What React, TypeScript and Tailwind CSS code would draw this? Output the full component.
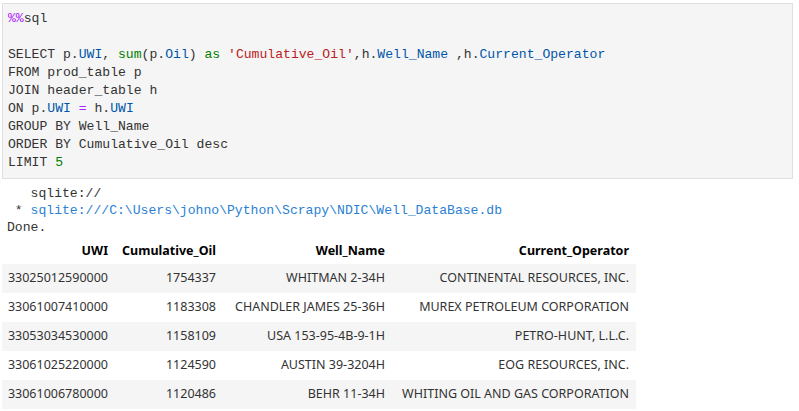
const mono = { fontFamily: '"Liberation Mono", "DejaVu Sans Mono", monospace' };

const rows = [
  ["33025012590000", "1754337", "WHITMAN 2-34H", "CONTINENTAL RESOURCES, INC."],
  ["33061007410000", "1183308", "CHANDLER JAMES 25-36H", "MUREX PETROLEUM CORPORATION"],
  ["33053034530000", "1158109", "USA 153-95-4B-9-1H", "PETRO-HUNT, L.L.C."],
  ["33061025220000", "1124590", "AUSTIN 39-3204H", "EOG RESOURCES, INC."],
  ["33061006780000", "1120486", "BEHR 11-34H", "WHITING OIL AND GAS CORPORATION"],
];

const cols = ["UWI", "Cumulative_Oil", "Well_Name", "Current_Operator"];
const widths = ["w-[113px]", "w-[108px]", "w-[169px]", "w-[244px]"];

function Blue({ children }: { children: React.ReactNode }) {
  return <span className="text-[#0055aa]">{children}</span>;
}
function Green({ children }: { children: React.ReactNode }) {
  return <span className="text-[#008000]">{children}</span>;
}

export default function App() {
  return (
    <div className="w-[799px] h-[411px] overflow-hidden bg-white pl-[2px] pt-[3px]">
      {/* input cell */}
      <div
        className="w-[791px] h-[176px] border border-[#e0e0e0] bg-[#f5f5f5] px-[5px] pt-[6px] text-[13.1px] leading-[18px] text-[#333] whitespace-pre"
        style={mono}
      >
        <div>
          <span className="text-[#aa22ff]">%%</span>sql
        </div>
        <div> </div>
        <div>
          SELECT p.<Blue>UWI</Blue>, <Green>sum</Green>(p.<Blue>Oil</Blue>) <Green>as</Green>{" "}
          <span className="text-[#ba2121]">'Cumulative_Oil'</span>,h.<Blue>Well_Name</Blue> ,h.
          <Blue>Current_Operator</Blue>
        </div>
        <div>FROM prod_table p</div>
        <div>JOIN header_table h</div>
        <div>
          ON p.<Blue>UWI</Blue> <span className="text-[#aa22ff]">=</span> h.<Blue>UWI</Blue>
        </div>
        <div>GROUP BY Well_Name</div>
        <div>ORDER BY Cumulative_Oil desc</div>
        <div>
          LIMIT <Green>5</Green>
        </div>
      </div>

      {/* output */}
      <div
        className="pl-[5px] pt-[6px] text-[13.1px] leading-[17px] text-[#333] whitespace-pre"
        style={mono}
      >
        <div>   sqlite://</div>
        <div>
          {" * "}
          <span className="text-[#2a7fd4]">sqlite:///C:\Users\johno\Python\Scrapy\NDIC\Well_DataBase.db</span>
        </div>
        <div>Done.</div>
      </div>

      <table
        className="mt-[2px] border-collapse text-[12.5px] text-[#333]"
        style={{ fontFamily: '"Noto Sans", "Open Sans", sans-serif' }}
      >
        <thead>
          <tr className="h-[26px]">
            {cols.map((c, i) => (
              <th key={c} className={`${widths[i]} text-right font-bold text-black pr-[7px] align-middle`}>
                {c}
              </th>
            ))}
          </tr>
        </thead>
        <tbody>
          {rows.map((r, ri) => (
            <tr key={r[0]} className={`h-[29px] ${ri % 2 === 0 ? "bg-[#f5f5f5]" : "bg-white"}`}>
              {r.map((v, i) => (
                <td key={i} className={`${widths[i]} text-right pr-[7px] whitespace-nowrap align-middle`}>
                  {v}
                </td>
              ))}
            </tr>
          ))}
        </tbody>
      </table>
    </div>
  );
}
